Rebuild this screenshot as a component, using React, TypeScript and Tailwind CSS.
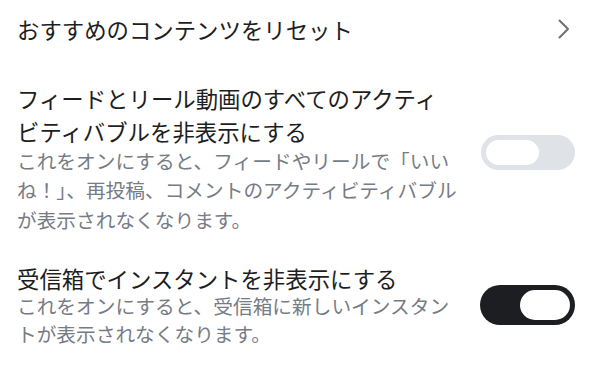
import React from 'react';

function Toggle({ on }: { on: boolean }) {
  if (on) {
    return (
      <div className="flex h-[40px] w-[95px] shrink-0 items-center justify-end rounded-full bg-[#1c1e21] px-[5px]">
        <div className="h-[30px] w-[50px] rounded-full bg-white" />
      </div>
    );
  }
  return (
    <div className="flex h-[35px] w-[94px] shrink-0 items-center rounded-full bg-[#dfe2e6] px-[5px]">
      <div className="h-[25px] w-[53px] rounded-full bg-white" />
    </div>
  );
}

export default function App() {
  return (
    <div
      className="h-[374px] w-[590px] overflow-hidden bg-white pl-[17px] pr-[15px] text-[#1c1e21]"
      style={{ fontFamily: '"Noto Sans CJK JP", "Noto Sans", sans-serif' }}
    >
      <div className="flex h-[58px] items-center justify-between">
        <span className="text-[22.4px] leading-[33px]">おすすめのコンテンツをリセット</span>
        <svg width="12" height="20" viewBox="0 0 12 20" className="mr-[5px]">
          <polyline points="1.5,1.5 10,10 1.5,18.5" fill="none" stroke="#6b7078" strokeWidth="2" strokeLinecap="round" strokeLinejoin="round" />
        </svg>
      </div>

      <div className="mt-[23.5px] flex items-center justify-between">
        <div className="w-[446px]">
          <div className="max-w-[440px] text-[22.4px] leading-[33px]">フィードとリール動画のすべてのアクティビティバブルを非表示にする</div>
          <div className="-mt-[2px] text-[19.7px] leading-[29.5px] text-[#767c85]">
            これをオンにすると、フィードやリールで「いいね！」、再投稿、コメントのアクティビティバブルが表示されなくなります。
          </div>
        </div>
        <div className="-mt-[10px]">
          <Toggle on={false} />
        </div>
      </div>

      <div className="mt-[27.5px] flex items-center justify-between">
        <div className="w-[446px]">
          <div className="text-[22.4px] leading-[33px]">受信箱でインスタントを非表示にする</div>
          <div className="-mt-[3px] text-[19.7px] leading-[28.5px] text-[#767c85]">
            これをオンにすると、受信箱に新しいインスタントが表示されなくなります。
          </div>
        </div>
        <Toggle on={true} />
      </div>
    </div>
  );
}
